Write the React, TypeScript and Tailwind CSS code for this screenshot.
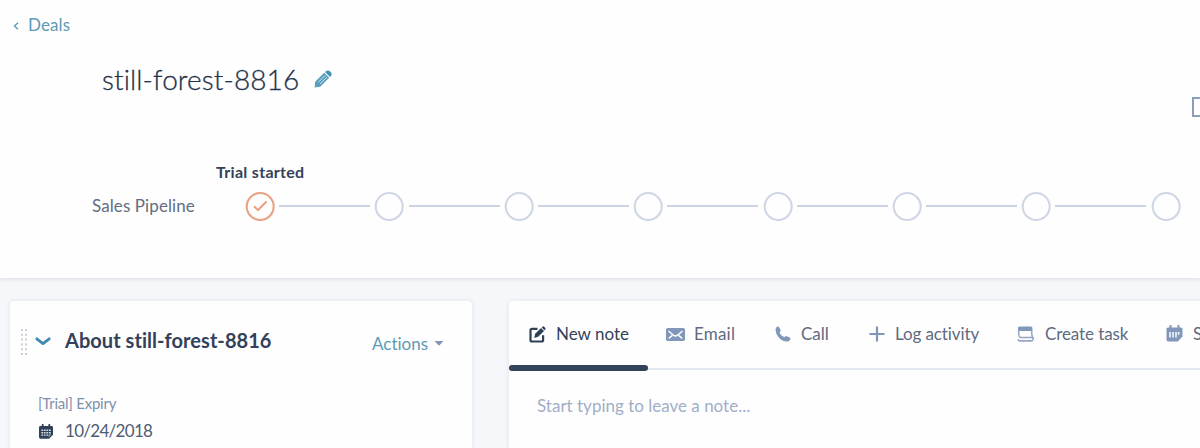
import type { ReactNode } from 'react';

const stages = [
    { id: 1, done: true },
    { id: 2, done: false },
    { id: 3, done: false },
    { id: 4, done: false },
    { id: 5, done: false },
    { id: 6, done: false },
    { id: 7, done: false },
    { id: 8, done: false },
];

function PencilIcon() {
    return (
        <svg className="mb-0.5 h-[18px] w-[18px] shrink-0" viewBox="0 0 18 18">
            <path d="M0.6 17.4 L1.2 11.8 L10.2 2.8 L15.2 7.8 L6.2 16.8 Z" fill="#5a9fbb" />
            <path d="M11 2 L12.3 0.9 Q14 -0.2 15.9 1.2 L16.8 2.1 Q18.1 4 17.1 5.7 L16 7 Z" fill="#4792b3" />
            <path d="M4.3 12.3 L11.2 5.4 M6 14 L12.9 7.1" stroke="#d5e8ef" strokeWidth="0.9" fill="none" />
        </svg>
    );
}

function NoteIcon() {
    return (
        <svg className="h-[17px] w-[17px]" viewBox="0 0 17 17" fill="none">
            <path d="M8.5 2.8 H3 Q1.5 2.8 1.5 4.3 V14 Q1.5 15.5 3 15.5 H12.6 Q14.1 15.5 14.1 14 V9.2" stroke="#2f4157" strokeWidth="2.2" />
            <path d="M5.2 11.9 L6.2 7.8 L12 2 L15 5 L9.2 10.8 Z" fill="#2f4157" />
            <path d="M12.7 1.5 L13.5 0.7 Q14.4 0 15.1 0.7 L16.3 1.9 Q17 2.6 16.3 3.5 L15.5 4.3 Z" fill="#2f4157" />
        </svg>
    );
}

function EmailIcon() {
    return (
        <svg className="h-[13px] w-[19px]" viewBox="0 0 19 13" fill="none">
            <rect width="19" height="13" rx="1.8" fill="#8097ba" />
            <path d="M2.5 3 L7.5 7.2 Q9.5 8.8 11.5 7.2 L16.5 3 M2.7 10.5 L6.3 7.4 M16.3 10.5 L12.7 7.4" stroke="#fff" strokeWidth="1.5" />
        </svg>
    );
}

function CallIcon() {
    return (
        <svg className="h-4 w-4" viewBox="0 0 16 16">
            <path
                d="M0.5 3.6 Q0.5 1.4 2.6 0.6 Q3.6 0.4 4.1 1.3 L5.6 4 Q6 4.9 5.3 5.5 L4.5 6.4 Q5.5 9.6 9.2 11.2 L10.1 10.4 Q10.8 9.8 11.7 10.2 L14.8 11.6 Q15.8 12.1 15.4 13.2 Q14.6 15.4 12.4 15.5 Q7.4 15.6 3.8 11.6 Q0.6 8 0.5 3.6 Z"
                fill="#8097ba"
            />
        </svg>
    );
}

function PlusIcon() {
    return (
        <svg className="h-4 w-4" viewBox="0 0 16 16">
            <path d="M8 1.3 V14.7 M1.3 8 H14.7" stroke="#8097ba" strokeWidth="2.2" strokeLinecap="round" />
        </svg>
    );
}

function TaskIcon() {
    return (
        <svg className="h-4 w-[17px]" viewBox="0 0 17 16" fill="none">
            <path d="M1 5 V2 Q1 0.5 2.5 0.5 H14 Q15.4 0.5 15.4 2 V5 Z" fill="#8097ba" />
            <path d="M1.7 4 V7.5 Q1.7 10 3 11.4 H15.7 Q14.7 9.5 14.7 7 V4" stroke="#93a7c4" strokeWidth="1.5" />
            <path d="M0.7 13.3 Q1.5 14.9 3 14.9 H14.3 Q15.9 14.9 16.1 13 V11" stroke="#93a7c4" strokeWidth="1.6" />
        </svg>
    );
}

function ScheduleIcon() {
    return (
        <svg className="h-[17px] w-[17px]" viewBox="0 0 17 17" fill="none">
            <path d="M2 2.5 H15 Q16.5 2.5 16.5 4 V11.5 L11.8 16.5 H2.2 Q0.5 16.5 0.5 14.8 V4 Q0.5 2.5 2 2.5 Z" fill="#8097ba" />
            <path d="M4.5 0.8 V3 M12.5 0.8 V3" stroke="#8097ba" strokeWidth="2" strokeLinecap="round" />
            <path d="M4 7 V12.6 M7 7 V12.6 M10 7 V12.6 M12.6 7 V9.8" stroke="#f4f7fa" strokeWidth="1.6" />
        </svg>
    );
}

function DateIcon() {
    return (
        <svg className="h-[15px] w-[14px]" viewBox="0 0 14 15" fill="none">
            <path d="M1.4 2 H12.6 Q14 2 14 3.4 V10.7 L10 14.7 H1.6 Q0 14.7 0 13.1 V3.4 Q0 2 1.4 2 Z" fill="#2f4157" />
            <path d="M3.7 0.8 V3 M10.3 0.8 V3" stroke="#2f4157" strokeWidth="1.8" strokeLinecap="round" />
            <path d="M2.3 6.3 H11.8 M2.3 8.7 H11.8 M2.3 11.1 H9.2" stroke="#d3dae3" strokeWidth="1.4" strokeDasharray="1.8 0.75" />
            <path d="M10.1 12.9 V10.8 H12.2" stroke="#b6c1ce" strokeWidth="0.8" />
        </svg>
    );
}

function Stage({ done, last }: { done: boolean; last: boolean }) {
    return (
        <>
            <svg className="h-[30px] w-[30px] shrink-0" viewBox="0 0 30 30" fill="none">
                <circle cx="15.2" cy="15.5" r="13.5" stroke={done ? '#e9a285' : '#cfd6e4'} strokeWidth="2.1" />
                {done && <path d="M9 15.2 L13 19 L21.6 10.6" stroke="#e9a285" strokeWidth="2.1" />}
            </svg>
            {!last && <div className="mx-[4.2px] mt-px h-0.5 w-[91px] shrink-0 bg-[#cbd4e3]" />}
        </>
    );
}

function Tab({ icon, children, className }: { icon: ReactNode; children: ReactNode; className: string }) {
    return (
        <div className={`flex shrink-0 items-center whitespace-nowrap text-[17px] ${className}`}>
            <span className="flex w-[19px] shrink-0 justify-center">{icon}</span>
            {children}
        </div>
    );
}

export default function App() {
    return (
        <div className="flex h-[448px] w-[1200px] flex-col overflow-hidden bg-[#f5f7fa] font-[Lato,sans-serif] text-[#33415a] [font-variant-ligatures:none]">
            <header className="h-[278px] shrink-0 bg-[#fefefe] shadow-[0_1px_4px_rgba(45,62,80,0.14)]">
                <a className="flex h-[50px] items-center pl-[13px] text-[#5c9ab7]">
                    <svg className="mt-0.5 h-2 w-[6px]" viewBox="0 0 6 8" fill="none">
                        <path d="M5 0.7 L1.5 4 L5 7.3" stroke="#5c9ab7" strokeWidth="1.4" />
                    </svg>
                    <span className="ml-[9px] text-[17px] leading-5 tracking-[0.1px]">Deals</span>
                </a>

                <div className="flex h-[60px] items-center">
                    <h1 className="ml-[102px] w-[212px] pb-0.5 text-[28px] leading-9 font-light tracking-[0.1px] whitespace-nowrap text-[#25324a] [-webkit-text-stroke:0.3px_#25324a]">
                        still-forest-8816
                    </h1>
                    <PencilIcon />
                    <div className="mt-[53px] ml-auto h-5 w-2 border-2 border-r-0 border-[#8c9dba]" />
                </div>

                <div className="mt-[51px] ml-[216px] h-[22px] text-[16px] leading-[22px] font-bold tracking-[0.3px]">Trial started</div>
                <div className="mt-[7px] flex h-[31px] items-center">
                    <div className="ml-[92px] w-[153px] shrink-0 text-[17px] tracking-[0.1px] text-[#626d82]">Sales Pipeline</div>
                    {stages.map((stage, index) => (
                        <Stage key={stage.id} done={stage.done} last={index === stages.length - 1} />
                    ))}
                </div>
            </header>

            <main className="flex flex-1 pt-[23px] pl-[10px]">
                <section className="w-[462px] shrink-0 rounded-t-[4px] bg-[#fefefe] shadow-[0_0_4px_rgba(45,62,80,0.12)]">
                    <div className="flex h-20 items-center">
                        <svg className="mt-0.5 ml-[11px] h-[27px] w-[7px]" viewBox="0 0 7 27">
                            {[0, 4.8, 9.6, 14.4, 19.2, 24].map((y) => (
                                <g key={y} fill="#cbd0da">
                                    <rect y={y} width="2" height="2" />
                                    <rect x="4" y={y} width="2" height="2" />
                                </g>
                            ))}
                        </svg>
                        <svg className="ml-[7px] h-[9px] w-4" viewBox="0 0 16 9" fill="none">
                            <path d="M1.8 1.8 L8 6.7 L14.2 1.8" stroke="#4189ae" strokeWidth="2.8" strokeLinecap="round" strokeLinejoin="round" />
                        </svg>
                        <h2 className="ml-[14px] w-[307px] pb-0.5 text-[20px] font-bold tracking-[0.05px] whitespace-nowrap">About still-forest-8816</h2>
                        <span className="mt-[5px] w-[62px] text-[17px] text-[#5c9ab7]">Actions</span>
                        <svg className="mt-1 h-[5px] w-[10px]" viewBox="0 0 10 5">
                            <path d="M0.5 0 H9.5 L5 4.8 Z" fill="#8097ba" />
                        </svg>
                    </div>
                    <div className="mt-3 ml-7 text-[15px] leading-5 tracking-[-0.25px] text-[#8190ab]">[Trial] Expiry</div>
                    <div className="mt-1.5 ml-[29px] flex h-6 items-center text-[17px] tracking-[-0.7px] text-[#4f5b72]">
                        <DateIcon />
                        <span className="ml-3">10/24/2018</span>
                    </div>
                </section>

                <section className="ml-[37px] w-[700px] shrink-0 rounded-tl-[4px] bg-[#fefefe] shadow-[0_0_4px_rgba(45,62,80,0.12)]">
                    <div className="flex h-[69px] border-b-2 border-[#e3e7ef] text-[#5f6a80]">
                        <div className="h-[70px] w-[139px] shrink-0">
                            <Tab icon={<NoteIcon />} className="h-[64px] gap-[9px] pt-0.5 pl-[19px] text-[#33415a]">
                                New note
                            </Tab>
                            <div className="h-[6px] rounded-[3px] bg-[#33435a]" />
                        </div>
                        <Tab icon={<EmailIcon />} className="ml-[18px] w-[107px] gap-[9px] pb-px tracking-[0.2px]">
                            Email
                        </Tab>
                        <Tab icon={<CallIcon />} className="w-[94px] gap-[9px] pb-px">
                            Call
                        </Tab>
                        <Tab icon={<PlusIcon />} className="w-[149px] gap-[9px] pb-px tracking-[-0.1px]">
                            Log activity
                        </Tab>
                        <Tab icon={<TaskIcon />} className="w-[149px] gap-[10px] pb-px tracking-[-0.1px]">
                            Create task
                        </Tab>
                        <Tab icon={<ScheduleIcon />} className="gap-[9px] pb-0.5">
                            Schedule
                        </Tab>
                    </div>
                    <div className="mt-6 ml-7 text-[17px] leading-6 text-[#a0aec6]">Start typing to leave a note...</div>
                </section>
            </main>
        </div>
    );
}
